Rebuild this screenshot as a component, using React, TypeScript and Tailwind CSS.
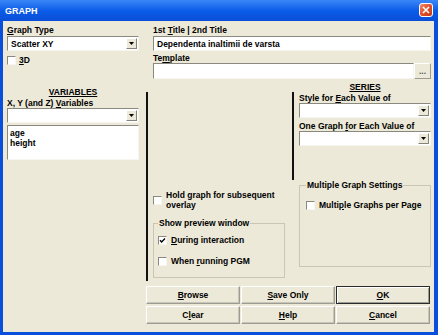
import React from 'react'

const sunken =
  'border border-t-[#8a897f] border-l-[#8a897f] border-r-[#f6f5f0] border-b-[#f6f5f0] bg-white'

function Arrow() {
  return (
    <span className="mr-px flex h-[11px] w-[11px] items-center justify-center border border-t-white border-l-white border-r-[#85847a] border-b-[#85847a] bg-[#ece9d8]">
      <svg width="5" height="3" viewBox="0 0 5 3">
        <path d="M0 0h5L2.5 3z" fill="#000" />
      </svg>
    </span>
  )
}

function Select({ value }: { value?: string }) {
  return (
    <div className={`flex h-[15px] items-center ${sunken}`}>
      <span className="flex-1 truncate pl-[3px]">{value}</span>
      <Arrow />
    </div>
  )
}

function Check({ checked }: { checked?: boolean }) {
  return (
    <span className={`flex h-[9px] w-[9px] shrink-0 items-center justify-center ${sunken}`}>
      {checked && (
        <svg width="7" height="7" viewBox="0 0 7 7">
          <path d="M1 3.2l1.6 1.7L6 1.4" stroke="#000" strokeWidth="1.4" fill="none" />
        </svg>
      )}
    </span>
  )
}

function Btn({ children, isDefault }: { children: React.ReactNode; isDefault?: boolean }) {
  return (
    <div
      className={
        isDefault
          ? 'flex items-center justify-center border border-[#2b2b2b] bg-[#ece9d8] shadow-[inset_1px_1px_0_#fff,inset_-1px_-1px_0_#9d9c92]'
          : 'flex items-center justify-center border border-t-white border-l-white border-r-[#9d9c92] border-b-[#9d9c92] bg-[#ece9d8] shadow-[inset_-1px_-1px_0_#c8c6b8]'
      }
    >
      {children}
    </div>
  )
}

const U = ({ children }: { children: React.ReactNode }) => (
  <u className="decoration-1 underline-offset-[1px]">{children}</u>
)

export default function App() {
  return (
    <div
      className="flex h-[335px] w-[438px] flex-col bg-[#0a4fdb] text-[8.5px] font-bold leading-[10px] text-black"
      style={{ fontFamily: '"Liberation Sans", Arial, sans-serif' }}
    >
      {/* title bar */}
      <div className="flex h-[21px] items-center justify-between bg-gradient-to-b from-[#3a86f7] via-[#0b5ce8] to-[#0a4ed8] pl-[5px] pr-[5px]">
        <span className="text-[9px] text-white">GRAPH</span>
        <span className="-mt-[1px] flex h-[14px] w-[14px] items-center justify-center rounded-[3px] border border-white bg-gradient-to-br from-[#ee8a6a] via-[#e0502a] to-[#c23a16]">
          <svg width="8" height="8" viewBox="0 0 8 8">
            <path d="M1 1l6 6M7 1L1 7" stroke="#fff" strokeWidth="1.6" />
          </svg>
        </span>
      </div>

      <div className="mb-[3px] ml-[3px] mr-[4px] flex flex-1 flex-col bg-[#ece9d8] pl-[4px] pt-[4px]">
        {/* top row */}
        <div className="flex gap-[14px]">
          <div className="flex w-[132px] flex-col">
            <span>
              <U>G</U>raph Type
            </span>
            <div className="mt-[1px]">
              <Select value="Scatter XY" />
            </div>
            <div className="mt-[4px] flex items-center gap-[3px]">
              <Check />
              <span>
                <U>3</U>D
              </span>
            </div>
          </div>
          <div className="flex w-[278px] flex-col">
            <span>
              1st <U>T</U>itle | 2nd Title
            </span>
            <div className={`mt-[1px] flex h-[15px] items-center pl-[3px] ${sunken}`}>
              Dependenta inaltimii de varsta
            </div>
            <span className="mt-[2px]">
              Te<U>m</U>plate
            </span>
            <div className="flex">
              <div className={`h-[16px] flex-1 ${sunken}`} />
              <div className="flex h-[16px] w-[17px] items-center justify-center border border-t-white border-l-white border-r-[#9d9c92] border-b-[#9d9c92] text-[#555]">
                ...
              </div>
            </div>
          </div>
        </div>

        {/* main row */}
        <div className="mt-[8px] flex">
          <div className="flex w-[132px] flex-col">
            <span className="text-center">
              <U>VARIABLES</U>
            </span>
            <span className="mt-[1px]">
              X, Y (and Z) <U>V</U>ariables
            </span>
            <Select />
            <div className={`mt-[2px] flex h-[35px] flex-col pl-[2px] pt-[2px] ${sunken}`}>
              <span>age</span>
              <span>height</span>
            </div>
          </div>

          <div className="ml-[7px] flex w-[285px] flex-col">
            <div className="flex h-[194px]">
              <div className="mt-[5px] w-[2px] bg-[#111]" />
              <div className="flex flex-1 flex-col">
                <div className="flex h-[93px]">
                  <div className="w-[144px]" />
                  <div className="mt-[5px] w-[2px] bg-[#111]" />
                  <div className="flex flex-1 flex-col pl-[5px]">
                    <span className="-mt-[5px] text-center">
                      <U>SERIES</U>
                    </span>
                    <span className="mt-[1px]">
                      Style for <U>E</U>ach Value of
                    </span>
                    <Select />
                    <span className="mt-[3px]">
                      One Graph <U>f</U>or Each Value of
                    </span>
                    <Select />
                  </div>
                </div>
                <div className="flex">
                  <div className="flex w-[137px] flex-col pl-[5px]">
                    <div className="mt-[10px] flex items-center gap-[4px]">
                      <Check />
                      <span>
                        Hold graph for subsequent
                        <br />
                        overlay
                      </span>
                    </div>
                    <fieldset className="mt-[8px] h-[60px] border border-[#c9c6b6] pl-[4px]">
                      <legend className="px-[1px]">Show preview window</legend>
                      <div className="mt-[7px] flex items-center gap-[4px]">
                        <Check checked />
                        <span>
                          <U>D</U>uring interaction
                        </span>
                      </div>
                      <div className="mt-[11px] flex items-center gap-[4px]">
                        <Check />
                        <span>
                          When <U>r</U>unning PGM
                        </span>
                      </div>
                    </fieldset>
                  </div>
                  <div className="ml-[14px] flex w-[132px] flex-col">
                    <fieldset className="h-[87px] border border-[#c9c6b6] pl-[6px]">
                      <legend className="px-[1px]">Multiple Graph Settings</legend>
                      <div className="mt-[10px] flex items-center gap-[4px]">
                        <Check />
                        <span>
                          Multi<U>p</U>le Graphs per Page
                        </span>
                      </div>
                    </fieldset>
                  </div>
                </div>
              </div>
            </div>

            <div className="mt-[5px] grid h-[38px] grid-cols-3 grid-rows-2 gap-x-[1px] gap-y-[2px] pr-[1px]">
              <Btn>
                <span>
                  <U>B</U>rowse
                </span>
              </Btn>
              <Btn>
                <span>
                  <U>S</U>ave Only
                </span>
              </Btn>
              <Btn isDefault>
                <span>
                  <U>O</U>K
                </span>
              </Btn>
              <Btn>
                <span>
                  C<U>l</U>ear
                </span>
              </Btn>
              <Btn>
                <span>
                  <U>H</U>elp
                </span>
              </Btn>
              <Btn>
                <span>
                  <U>C</U>ancel
                </span>
              </Btn>
            </div>
          </div>
        </div>
      </div>
    </div>
  )
}
